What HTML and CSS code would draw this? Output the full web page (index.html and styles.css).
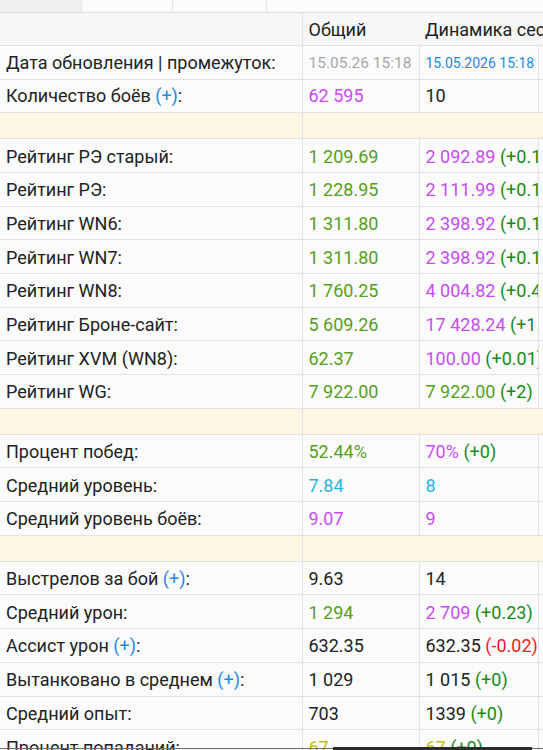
FILE: index.html
```html
<!DOCTYPE html>
<html lang="ru">
<head>
<meta charset="utf-8">
<link rel="stylesheet" href="styles.css">
</head>
<body>
<div class="page">
  <div class="tabs">
    <div class="tab tab-off"></div>
    <div class="tab"></div>
    <div class="tab tab-3"></div>
    <div class="tab tab-wide"></div>
  </div>
  <table class="stats">
    <colgroup>
      <col class="c-label"><col class="c-total"><col class="c-dyn"><col class="c-rest">
    </colgroup>
    <tr class="head">
      <td class="lbl"></td>
      <td class="nb">Общий</td>
      <td class="nb" colspan="2">Динамика сессии</td>
    </tr>
    <tr class="first">
      <td class="lbl">Дата обновления | промежуток:</td>
      <td class="date grey">15.05.26 15:18</td>
      <td class="date2 blue">15.05.2026 15:18</td>
      <td></td>
    </tr>
    <tr class="first">
      <td class="lbl">Количество боёв <span class="blue">(+)</span>:</td>
      <td class="purple">62 595</td>
      <td>10</td>
      <td></td>
    </tr>
    <tr class="band"><td class="lbl"></td><td colspan="3" class="nb"></td></tr>
    <tr>
      <td class="lbl">Рейтинг РЭ старый:</td>
      <td class="green">1 209.69</td>
      <td><span class="purple">2 092.89</span> <span class="dg">(+0.14)</span></td>
      <td></td>
    </tr>
    <tr>
      <td class="lbl">Рейтинг РЭ:</td>
      <td class="green">1 228.95</td>
      <td><span class="purple">2 111.99</span> <span class="dg">(+0.16)</span></td>
      <td></td>
    </tr>
    <tr>
      <td class="lbl">Рейтинг WN6:</td>
      <td class="green">1 311.80</td>
      <td><span class="purple">2 398.92</span> <span class="dg">(+0.19)</span></td>
      <td></td>
    </tr>
    <tr>
      <td class="lbl">Рейтинг WN7:</td>
      <td class="green">1 311.80</td>
      <td><span class="purple">2 398.92</span> <span class="dg">(+0.19)</span></td>
      <td></td>
    </tr>
    <tr>
      <td class="lbl">Рейтинг WN8:</td>
      <td class="green">1 760.25</td>
      <td><span class="purple">4 004.82</span> <span class="dg">(+0.47)</span></td>
      <td></td>
    </tr>
    <tr>
      <td class="lbl">Рейтинг Броне-сайт:</td>
      <td class="green">5 609.26</td>
      <td><span class="purple">17 428.24</span> <span class="dg">(+1.25)</span></td>
      <td></td>
    </tr>
    <tr>
      <td class="lbl">Рейтинг XVM (WN8):</td>
      <td class="green">62.37</td>
      <td><span class="purple">100.00</span> <span class="dg">(+0.01)</span></td>
      <td></td>
    </tr>
    <tr>
      <td class="lbl">Рейтинг WG:</td>
      <td class="green">7 922.00</td>
      <td><span class="green">7 922.00</span> <span class="dg">(+2)</span></td>
      <td></td>
    </tr>
    <tr class="band"><td class="lbl"></td><td colspan="3" class="nb"></td></tr>
    <tr>
      <td class="lbl">Процент побед:</td>
      <td class="green">52.44%</td>
      <td><span class="purple">70%</span> <span class="dg">(+0)</span></td>
      <td></td>
    </tr>
    <tr>
      <td class="lbl">Средний уровень:</td>
      <td class="cyan">7.84</td>
      <td class="cyan">8</td>
      <td></td>
    </tr>
    <tr>
      <td class="lbl">Средний уровень боёв:</td>
      <td class="purple">9.07</td>
      <td class="purple">9</td>
      <td></td>
    </tr>
    <tr class="band"><td class="lbl"></td><td colspan="3" class="nb"></td></tr>
    <tr>
      <td class="lbl">Выстрелов за бой <span class="blue">(+)</span>:</td>
      <td>9.63</td>
      <td>14</td>
      <td></td>
    </tr>
    <tr>
      <td class="lbl">Средний урон:</td>
      <td class="green">1 294</td>
      <td><span class="purple">2 709</span> <span class="dg">(+0.23)</span></td>
      <td></td>
    </tr>
    <tr>
      <td class="lbl">Ассист урон <span class="blue">(+)</span>:</td>
      <td>632.35</td>
      <td>632.35 <span class="red">(-0.02)</span></td>
      <td></td>
    </tr>
    <tr>
      <td class="lbl">Вытанковано в среднем <span class="blue">(+)</span>:</td>
      <td>1 029</td>
      <td>1 015 <span class="dg">(+0)</span></td>
      <td></td>
    </tr>
    <tr>
      <td class="lbl">Средний опыт:</td>
      <td>703</td>
      <td>1339 <span class="dg">(+0)</span></td>
      <td></td>
    </tr>
    <tr>
      <td class="lbl">Процент попаданий:</td>
      <td class="yellow">67</td>
      <td><span class="yellow">67</span> <span class="dg">(+0)</span></td>
      <td></td>
    </tr>
  </table>
  <div class="hscroll"><div class="thumb"></div></div>
</div>
</body>
</html>
```

FILE: styles.css
```css
html, body {
  margin: 0;
  padding: 0;
  background: #fafafa;
  overflow: hidden;
}
.page {
  width: 543px;
  height: 750px;
  overflow: hidden;
  position: relative;
  font-family: Roboto, "Noto Sans", sans-serif;
  font-size: 18px;
  color: #222;
}
.tabs {
  display: flex;
  height: 12px;
  border-bottom: 1px solid #dedede;
  background: #fafafa;
}
.tab {
  width: 90px;
  border-right: 1px solid #e4e4e4;
  background: #fbfbfb;
}
.tab-off {
  width: 81px;
  background: #f0f0f0;
}
.tab-3 {
  width: 93px;
}
.tab-wide {
  flex: 1;
  border-right: none;
}
.stats {
  border-collapse: collapse;
  table-layout: fixed;
  width: 640px;
}
.c-label { width: 302px; }
.c-total { width: 117px; }
.c-dyn { width: 119px; }
.c-rest { width: 102px; }
.stats td {
  height: 30.7px;
  padding: 2px 0 0 6px;
  border-bottom: 1px solid #e2e2e2;
  border-right: 1px solid #e2e2e2;
  white-space: nowrap;
  overflow: hidden;
  background: #fbfbfb;
  vertical-align: middle;
  line-height: 20px;
}
.stats td.nb {
  border-right: none;
}
.first td {
  height: 31.6px;
  padding-top: 1px;
}
.head td {
  background: #f7f7f7;
  height: 30px;
  padding-top: 2px;
}
.band td {
  background: #fdf6e3;
  height: 25px;
  padding-top: 0;
}
.date {
  font-size: 15.5px;
}
.date2 {
  font-size: 14px;
}
.grey { color: #a6a6a6; }
.blue { color: #1e88e5; }
.purple { color: #c84bf5; }
.green { color: #55a01c; }
.dg { color: #178a1a; }
.cyan { color: #29b5dc; }
.red { color: #f02020; }
.yellow { color: #c8bd1c; }
.hscroll {
  position: absolute;
  left: 0;
  right: 0;
  bottom: 0;
  height: 3px;
}
.hscroll::before {
  content: "";
  position: absolute;
  left: 0;
  right: 0;
  bottom: 1px;
  height: 1px;
  background: #6e6e6e;
}
.thumb {
  position: absolute;
  left: 333px;
  width: 199px;
  bottom: 0;
  height: 3px;
  background: #2b2b2b;
}
```
